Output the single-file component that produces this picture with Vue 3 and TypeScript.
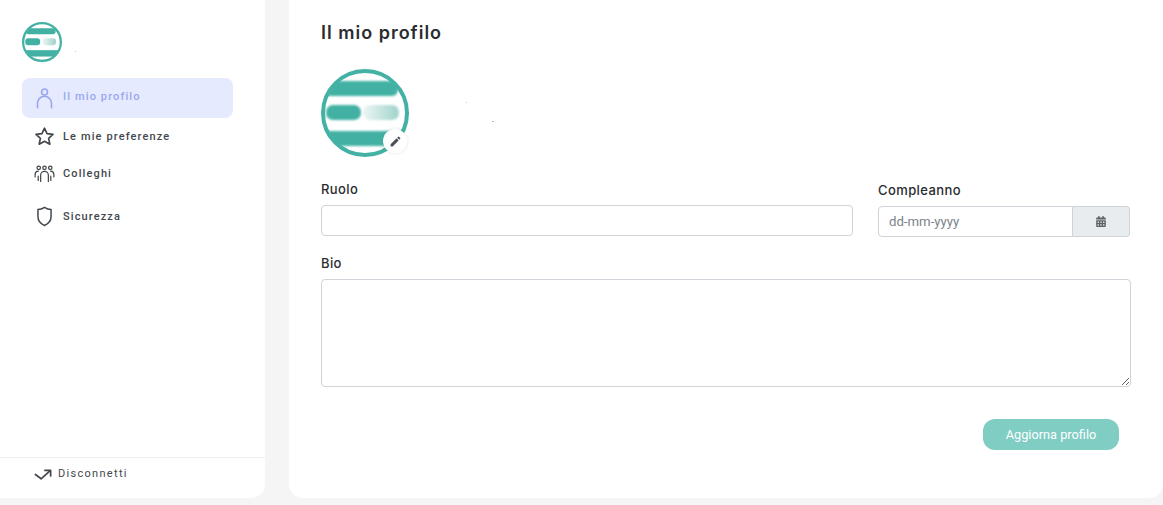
<script setup lang="ts">
import { ref } from 'vue';

const role = ref('');
const birthday = ref('');
const bio = ref('');

const navItems = [
    { id: 'profile', label: 'Il mio profilo', active: true },
    { id: 'prefs', label: 'Le mie preferenze', active: false },
    { id: 'team', label: 'Colleghi', active: false },
    { id: 'security', label: 'Sicurezza', active: false },
];
</script>

<template>
    <div class="page">
        <aside class="sidebar">
            <div class="brand">
                <svg class="logo-small" viewBox="0 0 88 88">
                    <defs>
                        <clipPath id="logo-clip-a"><circle cx="44" cy="44" r="40" /></clipPath>
                        <linearGradient id="logo-fade-a" x1="0" x2="1" y1="0" y2="0">
                            <stop offset="0" stop-color="#eef6f5" />
                            <stop offset="1" stop-color="#9fd3cb" />
                        </linearGradient>
                        <filter id="logo-blur-a"><feGaussianBlur stdDeviation="1" /></filter>
                    </defs>
                    <g clip-path="url(#logo-clip-a)">
                        <g filter="url(#logo-blur-a)">
                            <rect x="8" y="14" width="66" height="13" rx="6" fill="#43b1a4" />
                            <rect x="7" y="36" width="33" height="15" rx="7" fill="#43b1a4" />
                            <rect x="45" y="36" width="30" height="15" rx="7" fill="url(#logo-fade-a)" />
                            <rect x="4" y="62" width="80" height="14" fill="#43b1a4" />
                        </g>
                    </g>
                    <circle cx="44" cy="44" r="41.500" fill="none" stroke="#43b1a4" stroke-width="5" />
                </svg>
                <span class="speck brand-speck"></span>
            </div>

            <nav class="nav">
                <a
                    v-for="item in navItems"
                    :key="item.id"
                    href="#"
                    class="nav-item"
                    :class="[item.id, { active: item.active }]"
                >
                    <svg v-if="item.id === 'profile'" class="nav-icon" viewBox="0 0 24 24" fill="none" stroke="currentColor" stroke-width="1.8" stroke-linecap="round">
                        <circle cx="12" cy="4.500" r="3.400" />
                        <path d="M4 22.500v-5a8 8 0 0 1 16 0v5" />
                    </svg>
                    <svg v-else-if="item.id === 'prefs'" class="nav-icon" viewBox="0 0 24 24" fill="none" stroke="currentColor" stroke-width="1.900" stroke-linejoin="round">
                        <path d="M12 2.500l2.900 6.200 6.800.8-5 4.600 1.400 6.700L12 17.400l-6.100 3.400 1.400-6.700-5-4.600 6.800-.8z" />
                    </svg>
                    <svg v-else-if="item.id === 'team'" class="nav-icon" viewBox="0 0 24 24" fill="none" stroke="currentColor" stroke-width="1.400" stroke-linecap="round">
                        <circle cx="5.400" cy="5.500" r="2" />
                        <circle cx="12" cy="5.500" r="2" />
                        <circle cx="18.600" cy="5.500" r="2" />
                        <path d="M1.300 16v-3a3.800 3.800 0 0 1 3.600-3.600" />
                        <path d="M22.700 16v-3a3.800 3.800 0 0 0-3.600-3.600" />
                        <path d="M7.600 21v-7a4.400 4.400 0 0 1 8.800 0v7" />
                        <path d="M4.800 15v5M19.200 15v5" />
                    </svg>
                    <svg v-else class="nav-icon" viewBox="0 0 24 24" fill="none" stroke="currentColor" stroke-width="1.700" stroke-linejoin="round">
                        <path d="M12 1.500c2.400 1.600 4.800 2.400 7.500 2.600v8c0 4.500-3 8.400-7.500 10.200-4.500-1.800-7.500-5.700-7.500-10.200v-8c2.700-.2 5.100-1 7.500-2.600z" />
                    </svg>
                    <span>{{ item.label }}</span>
                </a>
            </nav>

            <div class="logout">
                <svg class="logout-icon" viewBox="0 0 20 12" fill="none" stroke="currentColor" stroke-width="1.800" stroke-linecap="round" stroke-linejoin="round">
                    <path d="M1.500 5.500l6 4.500 9.500-8.500" />
                    <path d="M11.500 1.200h6v5.800" />
                </svg>
                <span>Disconnetti</span>
            </div>
        </aside>

        <main class="content">
            <h1 class="title">Il mio profilo</h1>

            <div class="profile-head">
                <div class="avatar">
                    <svg class="logo-large" viewBox="0 0 88 88">
                        <defs>
                            <clipPath id="logo-clip-b"><circle cx="44" cy="44" r="40.500" /></clipPath>
                            <linearGradient id="logo-fade-b" x1="0" x2="1" y1="0" y2="0">
                                <stop offset="0" stop-color="#eef6f5" />
                                <stop offset="1" stop-color="#9fd3cb" />
                            </linearGradient>
                            <filter id="logo-blur-b"><feGaussianBlur stdDeviation="0.800" /></filter>
                        </defs>
                        <g clip-path="url(#logo-clip-b)">
                            <g filter="url(#logo-blur-b)">
                                <rect x="2" y="12" width="75" height="15" rx="6" fill="#43b1a4" />
                                <rect x="5" y="36" width="35" height="15" rx="7" fill="#43b1a4" />
                                <rect x="42" y="36" width="36" height="15" rx="7" fill="url(#logo-fade-b)" />
                                <rect x="2" y="62" width="84" height="15" fill="#43b1a4" />
                            </g>
                        </g>
                        <circle cx="44" cy="44" r="42" fill="none" stroke="#43b1a4" stroke-width="4" />
                    </svg>
                    <button class="edit-badge" type="button" aria-label="Modifica">
                        <svg viewBox="0 0 24 24" fill="#4a4f55">
                            <path d="M3 17.250V21h3.750L17.810 9.940l-3.750-3.750L3 17.250zM20.710 7.040a1 1 0 0 0 0-1.410l-2.340-2.340a1 1 0 0 0-1.410 0l-1.830 1.830 3.750 3.750 1.830-1.830z" />
                        </svg>
                    </button>
                </div>
                <div class="specks">
                    <span class="speck first"></span>
                    <span class="speck second"></span>
                </div>
            </div>

            <div class="row">
                <div class="field role-field">
                    <label for="role">Ruolo</label>
                    <input id="role" v-model="role" class="input" type="text" />
                </div>
                <div class="field birthday-field">
                    <label for="birthday">Compleanno</label>
                    <div class="input-group">
                        <input id="birthday" v-model="birthday" class="input date" type="text" placeholder="dd-mm-yyyy" />
                        <span class="addon">
                            <svg viewBox="0 0 448 512" fill="#5c6166">
                                <path d="M0 464c0 26.500 21.500 48 48 48h352c26.500 0 48-21.500 48-48V192H0v272zm320-196c0-6.600 5.400-12 12-12h40c6.600 0 12 5.400 12 12v40c0 6.600-5.400 12-12 12h-40c-6.600 0-12-5.400-12-12v-40zm0 128c0-6.600 5.400-12 12-12h40c6.600 0 12 5.400 12 12v40c0 6.600-5.400 12-12 12h-40c-6.600 0-12-5.400-12-12v-40zM192 268c0-6.600 5.400-12 12-12h40c6.600 0 12 5.400 12 12v40c0 6.600-5.400 12-12 12h-40c-6.600 0-12-5.400-12-12v-40zm0 128c0-6.600 5.400-12 12-12h40c6.600 0 12 5.400 12 12v40c0 6.600-5.400 12-12 12h-40c-6.600 0-12-5.400-12-12v-40zM64 268c0-6.600 5.400-12 12-12h40c6.600 0 12 5.400 12 12v40c0 6.600-5.400 12-12 12H76c-6.600 0-12-5.400-12-12v-40zm0 128c0-6.600 5.400-12 12-12h40c6.600 0 12 5.400 12 12v40c0 6.600-5.400 12-12 12H76c-6.600 0-12-5.400-12-12v-40zM400 64h-48V16c0-8.800-7.200-16-16-16h-32c-8.800 0-16 7.200-16 16v48H160V16c0-8.800-7.200-16-16-16h-32c-8.800 0-16 7.200-16 16v48H48C21.500 64 0 85.500 0 112v48h448v-48c0-26.500-21.500-48-48-48z" />
                            </svg>
                        </span>
                    </div>
                </div>
            </div>

            <div class="field bio-field">
                <label for="bio">Bio</label>
                <textarea id="bio" v-model="bio" class="input bio"></textarea>
            </div>

            <div class="actions">
                <button class="submit" type="button">Aggiorna profilo</button>
            </div>
        </main>
    </div>
</template>

<style>
html,
body {
    margin: 0;
    background: #f5f5f5;
}
</style>

<style scoped>
.page {
    display: flex;
    gap: 24px;
    width: 1163px;
    height: 505px;
    overflow: hidden;
    box-sizing: border-box;
    padding-bottom: 7px;
    background: #f5f5f5;
    font-family: Roboto, Arial, sans-serif;
    color: #212529;
}

.sidebar {
    display: flex;
    flex-direction: column;
    width: 265px;
    flex-shrink: 0;
    background: #fff;
    border-radius: 0 0 14px 0;
}

.brand {
    display: flex;
    padding: 22px 0 0 22px;
    height: 56px;
}

.logo-small {
    width: 40px;
    height: 40px;
}

.speck {
    display: block;
    width: 1px;
    height: 1px;
    background: #c4c8c8;
}

.brand-speck {
    margin: 29px 0 0 13px;
}

.nav {
    display: flex;
    flex-direction: column;
    width: 211px;
    margin-left: 22px;
}

.nav-item {
    display: flex;
    align-items: center;
    gap: 8px;
    height: 37px;
    padding-left: 12px;
    color: #43474d;
    font-size: 11px;
    font-weight: 500;
    letter-spacing: 1.120px;
    text-decoration: none;
}

.nav-item.profile {
    height: 40px;
}

.nav-item.profile span {
    margin-bottom: 4px;
}

.nav-item.security {
    height: 40px;
    margin-top: 4px;
}

.nav-item.active {
    background: #e5eafe;
    border-radius: 8px;
    color: #9aa7ee;
}

.nav-icon {
    width: 21px;
    height: 21px;
    flex-shrink: 0;
}

.logout {
    display: flex;
    align-items: center;
    gap: 5px;
    box-sizing: border-box;
    margin-top: auto;
    height: 41px;
    padding: 0 0 10px 34px;
    border-top: 1px solid #eeeeee;
    color: #43474d;
    font-size: 11px;
    letter-spacing: 1.300px;
}

.logout-icon {
    width: 19px;
    height: 12px;
    margin-top: 3px;
}

.content {
    flex: 1;
    box-sizing: border-box;
    padding: 21px 32px 0;
    background: #fff;
    border-radius: 0 0 14px 14px;
}

.title {
    margin: 0;
    font-family: Inter, Arial, sans-serif;
    font-size: 18px;
    line-height: 24px;
    font-weight: 600;
    letter-spacing: 1px;
    color: #2a2c30;
}

.profile-head {
    display: flex;
    margin-top: 24px;
}

.avatar {
    position: relative;
    width: 88px;
    height: 88px;
}

.logo-large {
    display: block;
    width: 88px;
    height: 88px;
}

.edit-badge {
    position: absolute;
    left: 62px;
    top: 60px;
    display: flex;
    align-items: center;
    justify-content: center;
    width: 24px;
    height: 24px;
    padding: 0;
    border: none;
    border-radius: 50%;
    background: #fff;
    box-shadow: 0 0 4px rgba(0, 0, 0, 0.1);
}

.edit-badge svg {
    width: 13px;
    height: 13px;
}

.specks {
    position: relative;
    margin-left: 57px;
}

.speck.first {
    margin-top: 33px;
}

.speck.second {
    margin: 18px 0 0 26px;
    width: 2px;
    background: #bbb;
}

.row {
    display: flex;
    gap: 25px;
    margin-top: 24px;
}

.field {
    display: flex;
    flex-direction: column;
}

.field label {
    margin-bottom: 8px;
    font-family: Inter, Arial, sans-serif;
    font-size: 13px;
    line-height: 16px;
    font-weight: 500;
    letter-spacing: 0.400px;
    color: #2a2c30;
}

.role-field {
    width: 532px;
}

.birthday-field {
    width: 252px;
    padding-top: 1px;
}

.input {
    box-sizing: border-box;
    width: 100%;
    height: 31px;
    padding: 0 10px;
    border: 1px solid #ced4da;
    border-radius: 4px;
    background: #fff;
    outline: none;
}

.input-group {
    display: flex;
    height: 31px;
}

.date {
    flex: 1;
    min-width: 0;
    padding-bottom: 1px;
    border-radius: 4px 0 0 4px;
    font-family: Roboto, Arial, sans-serif;
    font-size: 13.200px;
}

.date::placeholder {
    color: #7c838a;
    opacity: 1;
}

.addon {
    display: flex;
    align-items: center;
    justify-content: center;
    box-sizing: border-box;
    width: 57px;
    border: 1px solid #ced4da;
    border-left: none;
    border-radius: 0 4px 4px 0;
    background: #e9ecef;
}

.addon svg {
    width: 10px;
    height: 11px;
}

.bio-field {
    width: 810px;
    margin-top: 18px;
}

.bio {
    display: block;
    height: 108px;
    padding: 8px 10px;
    resize: vertical;
}

.actions {
    display: flex;
    justify-content: flex-end;
    width: 798px;
    margin-top: 32px;
}

.submit {
    width: 136px;
    height: 31px;
    padding: 0;
    border: none;
    border-radius: 12px;
    background: #80cdc3;
    color: #fff;
    font-family: Roboto, Arial, sans-serif;
    font-size: 12.750px;
}
</style>
